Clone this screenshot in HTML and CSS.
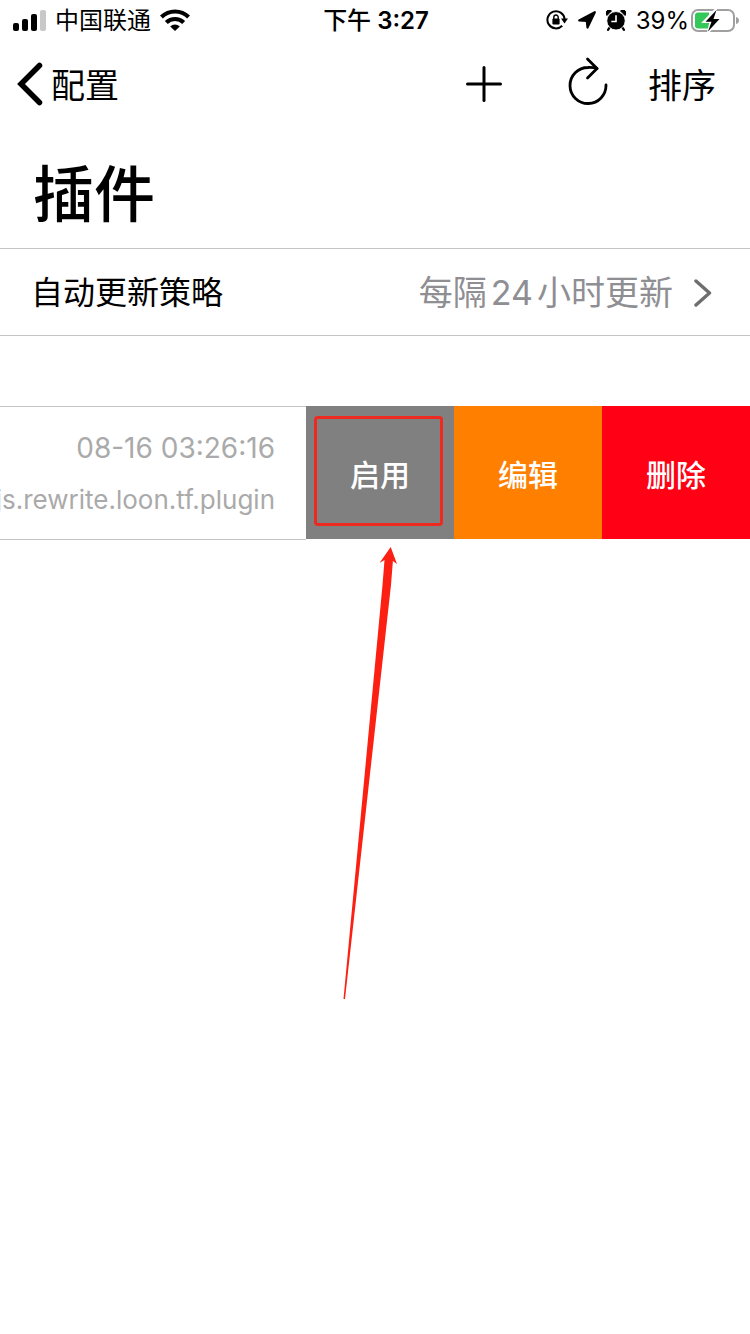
FILE: index.html
```html
<!DOCTYPE html>
<html lang="zh-CN">
<head>
<meta charset="utf-8">
<meta name="viewport" content="width=device-width, initial-scale=1">
<title>插件</title>
<link rel="stylesheet" href="styles.css">
</head>
<body>
<div class="status">
  <div class="status-left">
    <svg class="icon" width="33" height="21" viewBox="0 0 33 21" aria-hidden="true">
      <rect x="0" y="13" width="6" height="8" rx="2"/>
      <rect x="9" y="9" width="6" height="12" rx="2"/>
      <rect x="18" y="4" width="6" height="17" rx="2"/>
      <rect x="27" y="0" width="6" height="21" rx="2" fill="#c8c8c8"/>
    </svg>
    <span class="carrier">中国联通</span>
    <svg class="icon" width="30" height="22" viewBox="0 0 30 22" aria-hidden="true">
      <g fill="none" stroke="#000" stroke-width="4.200">
        <path d="M1.400 8a19.600 19.600 0 0 1 27.200 0"/>
        <path d="M6.300 13.500a12.600 12.600 0 0 1 17.400 0"/>
      </g>
      <path d="M10.200 17.400a7 7 0 0 1 9.600 0L15 22z"/>
    </svg>
  </div>
  <div class="clock"><span class="day-part">下午</span> 3:27</div>
  <div class="status-right">
    <svg class="icon" width="22" height="20" viewBox="0 0 22 20" aria-hidden="true">
      <path d="M16.200 15.800A8.600 8.600 0 1 1 18.600 9" fill="none" stroke="#000" stroke-width="2"/>
      <path d="M15 8.600h7l-3.500 5z"/>
      <rect x="6.400" y="8.600" width="7.200" height="6" rx="1"/>
      <path d="M7.800 9V7.200a2.200 2.200 0 0 1 4.400 0V9" fill="none" stroke="#000" stroke-width="1.400"/>
    </svg>
    <svg class="icon" width="18" height="18" viewBox="0 0 18 18" aria-hidden="true">
      <path d="M16.800 1.200 9.500 16.500 8.800 10 1.200 9.500z" stroke="#000" stroke-width="2.200" stroke-linejoin="round"/>
    </svg>
    <svg class="icon" width="20" height="21" viewBox="0 0 20 21" aria-hidden="true">
      <path d="m4 17-2 2.800M16 17l2 2.800" stroke="#000" stroke-width="2.200" stroke-linecap="round"/>
      <path d="M.9 5.500A3.200 3.200 0 0 1 5.500.9zM19.100 5.500A3.200 3.200 0 0 0 14.500.9z" stroke="#000" stroke-linejoin="round"/>
      <circle cx="10" cy="10.800" r="9.200" stroke="#fff" stroke-width=".8"/>
      <path d="M10 5.200v6.300H5.300" fill="none" stroke="#fff" stroke-width="1.600"/>
    </svg>
    <span class="percent">39%</span>
    <svg class="icon" width="48" height="25" viewBox="0 0 48 25" aria-hidden="true">
      <rect x="1" y="2" width="42" height="21" rx="6" fill="#fff" stroke="#a0a0a0" stroke-width="2"/>
      <path d="M45 9q3 1 3 3.500T45 16z" fill="#a0a0a0"/>
      <path d="M7 4.500h11v16H7q-3 0-3-3v-10q0-3 3-3z" fill="#34c759"/>
      <path d="M25 1 12.500 14h7L17 24.500l12.500-14h-7z" fill="#fff" stroke="#fff" stroke-width="2"/>
      <path d="M25.500 2 14.500 13.800h6L17 23.500 28.500 11H22.500z"/>
    </svg>
  </div>
</div>

<header class="nav">
  <button class="nav-button back" type="button">
    <svg class="icon" width="26" height="44" viewBox="0 0 26 44" aria-hidden="true">
      <path d="M22.500 3.500 4 22l18.500 18.500" fill="none" stroke="#000" stroke-width="5.500" stroke-linecap="round" stroke-linejoin="miter"/>
    </svg>
    <span class="nav-text">配置</span>
  </button>
  <div class="actions">
    <button class="nav-button" type="button" aria-label="添加">
      <svg class="icon" width="36" height="36" viewBox="0 0 36 36" aria-hidden="true">
        <path d="M18 1.500v33M1.500 18h33" fill="none" stroke="#000" stroke-width="3" stroke-linecap="round"/>
      </svg>
    </button>
    <button class="nav-button refresh" type="button" aria-label="刷新">
      <svg class="icon" width="40" height="48" viewBox="0 0 40 48" aria-hidden="true">
        <g fill="none" stroke="#000" stroke-width="2.800" stroke-linecap="round" stroke-linejoin="round">
          <path d="M38 28A18 18 0 1 1 20 10.500q4.500-.3 9 1"/>
          <path d="m19.500 2 9.500 9.500-9.500 9.500"/>
        </g>
      </svg>
    </button>
    <button class="nav-button" type="button"><span class="nav-text">排序</span></button>
  </div>
</header>

<main>
  <h1 class="title">插件</h1>
  <button class="setting" type="button">
    <span class="setting-label">自动更新策略</span>
    <span class="setting-value"><span>每隔</span><span>24</span><span>小时更新</span></span>
    <svg class="icon" width="18" height="28" viewBox="0 0 18 28" aria-hidden="true">
      <path d="M2 2 15.500 14 2 26" fill="none" stroke="#6e6e6e" stroke-width="3.400" stroke-linecap="round" stroke-linejoin="round"/>
    </svg>
  </button>

  <div class="swipe-row">
    <div class="plugin">
      <time class="plugin-time">08-16 03:26:16</time>
      <span class="plugin-name">js.rewrite.loon.tf.plugin</span>
    </div>
    <div class="enable-cell">
      <button class="action enable" type="button">启用</button>
      <span class="highlight"></span>
      <svg class="arrow" width="56" height="454" viewBox="0 0 56 454" aria-hidden="true">
        <path d="M48.700 0 55 17L50.900 14L49 38L3 452L1.500 452L40.500 38L42.500 13L37.500 16Z" fill="#fc2012"/>
      </svg>
    </div>
    <button class="action edit" type="button">编辑</button>
    <button class="action delete" type="button">删除</button>
  </div>
</main>
</body>
</html>
```

FILE: styles.css
```css
* {
  box-sizing: border-box;
}

body {
  min-height: 100vh;
  margin: 0;
  background: #fff;
  color: #000;
  font-family: Inter, "Noto Sans CJK SC", sans-serif;
}

button {
  margin: 0;
  padding: 0;
  border: 0;
  background: none;
  color: inherit;
  font: inherit;
}

.icon {
  display: block;
  flex: none;
}

.status {
  display: grid;
  grid-template-columns: 1fr auto 1fr;
  align-items: center;
  height: 40px;
  padding: 0 11px 0 13px;
  font-size: 24px;
  line-height: 36px;
}

.status-left,
.status-right {
  display: flex;
  align-items: center;
  gap: 10px;
}

.status-left {
  gap: 9px;
}

.carrier,
.clock,
.percent {
  padding-top: 2px;
}

.status-right {
  justify-content: flex-end;
}

.clock {
  font-weight: 600;
}

.day-part {
  font-weight: 500;
}

.percent {
  margin-right: -8px;
}

.nav {
  display: flex;
  align-items: center;
  justify-content: space-between;
  height: 88px;
  padding: 0 34px 0 17px;
  font-size: 34px;
  line-height: 48px;
}

.nav-button {
  display: flex;
  align-items: center;
  gap: 8px;
}

.nav-text {
  padding-top: 4px;
}

.actions {
  display: flex;
  align-items: center;
  gap: 40px;
}

.refresh {
  margin-left: 26px;
  padding-bottom: 6px;
}

.title {
  margin: 0;
  padding: 23px 33px 9px;
  font-size: 61px;
  font-weight: 500;
  line-height: 88px;
}

.setting {
  display: flex;
  align-items: center;
  width: 100%;
  height: 88px;
  padding: 2px 38px 0 31px;
  border-top: 1px solid #c4c4c6;
  border-bottom: 1px solid #c4c4c6;
  line-height: 48px;
}

.setting-label {
  margin-right: auto;
  font-size: 32px;
}

.setting-value {
  display: flex;
  gap: 4px;
  margin-right: 21px;
  color: #8e8e93;
  font-size: 34px;
}

.swipe-row {
  display: flex;
  height: 134px;
  margin-top: 70px;
}

.plugin {
  display: flex;
  flex: 1;
  flex-direction: column;
  align-items: flex-end;
  gap: 16px;
  min-width: 0;
  padding: 23px 31px 0 0;
  border-top: 1px solid #c4c4c6;
  border-bottom: 1px solid #c4c4c6;
  color: #aaa;
  line-height: 36px;
  white-space: nowrap;
  overflow: hidden;
}

.plugin-time {
  font-size: 28px;
}

.plugin-name {
  font-size: 26px;
}

.enable-cell {
  position: relative;
}

.action {
  display: block;
  width: 148px;
  height: 133px;
  color: #fff;
  font-size: 30px;
  font-weight: 500;
}

.enable {
  background: #808080;
}

.edit {
  background: #ff8000;
}

.delete {
  background: #ff0014;
}

.highlight {
  position: absolute;
  top: 10px;
  left: 8px;
  width: 129px;
  height: 110px;
  border: 3px solid #ee2a20;
  border-radius: 4px;
}

.arrow {
  position: absolute;
  top: 141px;
  left: 36px;
}
```
